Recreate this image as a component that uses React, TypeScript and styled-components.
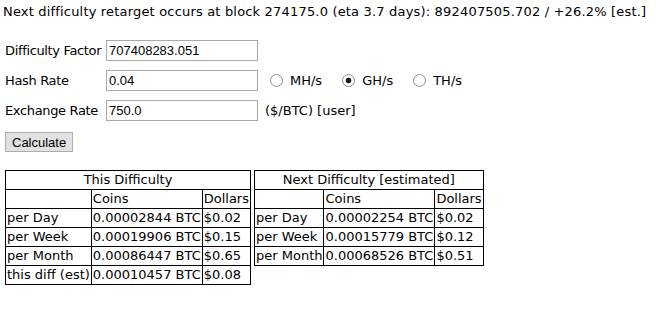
import styled, { createGlobalStyle } from "styled-components";

const GlobalStyle = createGlobalStyle`
  body {
    margin: 0;
    background: #fff;
    color: #000;
    font-family: "DejaVu Sans", Verdana, sans-serif;
    font-size: 13px;
  }
`;

interface EarnRow {
  label: string;
  coins: string;
  dollars: string;
}

const thisDifficulty: EarnRow[] = [
  { label: "per Day", coins: "0.00002844 BTC", dollars: "$0.02" },
  { label: "per Week", coins: "0.00019906 BTC", dollars: "$0.15" },
  { label: "per Month", coins: "0.00086447 BTC", dollars: "$0.65" },
  { label: "this diff (est)", coins: "0.00010457 BTC", dollars: "$0.08" },
];

const nextDifficulty: EarnRow[] = [
  { label: "per Day", coins: "0.00002254 BTC", dollars: "$0.02" },
  { label: "per Week", coins: "0.00015779 BTC", dollars: "$0.12" },
  { label: "per Month", coins: "0.00068526 BTC", dollars: "$0.51" },
];

const units = ["MH/s", "GH/s", "TH/s"];

const EarningsTable = ({ title, rows }: { title: string; rows: EarnRow[] }) => (
  <Table>
    <tbody>
      <tr>
        <Cell colSpan={3} $center>
          {title}
        </Cell>
      </tr>
      <tr>
        <Cell />
        <Cell>Coins</Cell>
        <Cell>Dollars</Cell>
      </tr>
      {rows.map((row) => (
        <tr key={row.label}>
          <Cell>{row.label}</Cell>
          <Cell>{row.coins}</Cell>
          <Cell>{row.dollars}</Cell>
        </tr>
      ))}
    </tbody>
  </Table>
);

export default function App() {
  return (
    <Page>
      <GlobalStyle />
      <Header>
        Next difficulty retarget occurs at block 274175.0 (eta 3.7 days): 892407505.702 /
        +26.2% [est.]
      </Header>

      <Form>
        <Label>Difficulty Factor</Label>
        <TextInput defaultValue="707408283.051" />
        <span />

        <Label>Hash Rate</Label>
        <TextInput defaultValue="0.04" />
        <RadioGroup>
          {units.map((unit) => (
            <RadioItem key={unit}>
              <Radio name="unit" defaultChecked={unit === "GH/s"} />
              {unit}
            </RadioItem>
          ))}
        </RadioGroup>

        <Label>Exchange Rate</Label>
        <TextInput defaultValue="750.0" />
        <Note>($/BTC) [user]</Note>
      </Form>

      <Button type="button">Calculate</Button>

      <Tables>
        <EarningsTable title="This Difficulty" rows={thisDifficulty} />
        <EarningsTable title="Next Difficulty [estimated]" rows={nextDifficulty} />
      </Tables>
    </Page>
  );
}

const Page = styled.div`
  padding: 4px 0 0 5px;
`;

const Header = styled.div`
  margin-left: -2px;
  line-height: 16px;
  letter-spacing: 0.18px;
  white-space: nowrap;
`;

const Form = styled.div`
  display: grid;
  grid-template-columns: 101px 152px auto;
  row-gap: 9px;
  align-items: center;
  margin-top: 20px;
`;

const Label = styled.span`
  line-height: 16px;
  white-space: nowrap;
  letter-spacing: -0.35px;
`;

const TextInput = styled.input.attrs({ type: "text" })`
  box-sizing: border-box;
  width: 152px;
  height: 21px;
  margin: 0;
  padding: 1px 2px;
  border: 1px solid #a9a9a9;
  font-family: "Liberation Sans", Arial, sans-serif;
  font-size: 13px;
  color: #000;
  outline: none;
`;

const RadioGroup = styled.div`
  display: flex;
  align-items: center;
  gap: 20px;
  margin-left: 12px;
`;

const RadioItem = styled.label`
  display: flex;
  align-items: center;
  gap: 7px;
`;

const Radio = styled.input.attrs({ type: "radio" })`
  appearance: none;
  box-sizing: border-box;
  width: 13px;
  height: 13px;
  margin: 0;
  border: 1px solid #8f8f8f;
  border-radius: 50%;
  background: #fff;

  &:checked {
    background: radial-gradient(circle, #1a1a1a 0 2.5px, #fff 3.2px);
  }
`;

const Note = styled.span`
  margin-left: 7px;
`;

const Button = styled.button`
  display: block;
  height: 20px;
  margin: 11px 0 0;
  padding: 0 6px;
  border: 1px solid #adadad;
  background: #e1e1e1;
  font-family: "Liberation Sans", Arial, sans-serif;
  font-size: 13px;
  color: #000;
`;

const Tables = styled.div`
  display: flex;
  align-items: flex-start;
  gap: 3px;
  margin-top: 18px;
`;

const Table = styled.table`
  border-collapse: collapse;
  border: 1px solid #000;
`;

const Cell = styled.td<{ $center?: boolean }>`
  border: 1px solid #000;
  padding: 1px;
  height: 16px;
  line-height: 16px;
  white-space: nowrap;
  text-align: ${({ $center }) => ($center ? "center" : "left")};
`;
